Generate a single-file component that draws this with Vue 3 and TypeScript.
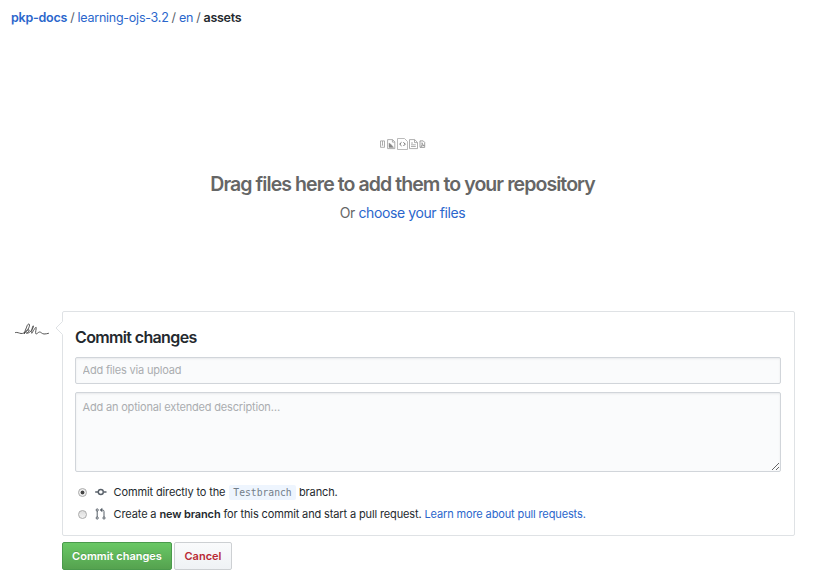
<script setup lang="ts">
import { ref } from 'vue'

const target = ref<'direct' | 'branch'>('direct')
const summary = ref('')
const description = ref('')
</script>

<template>
  <main class="page">
    <nav class="breadcrumb">
      <a class="root">pkp-docs</a><i>/</i><a class="folder">learning-ojs-3.2</a><i>/</i><a>en</a><i>/</i><strong>assets</strong>
    </nav>

    <section class="dropzone">
      <svg class="files" width="48" height="14" viewBox="0 0 48 14" fill="none" stroke="#999" stroke-width=".8">
        <path d="M1.5 3.9h4v6.4h-4zM3.5 4v4M2.8 8.2h1.4" />
        <path d="M8.6 2.6h5l2.2 2.2v6.8H8.6zM13.4 2.8v2.3h2.2" />
        <path d="M10 10.4V6l2 1.4 2.6 3z" fill="#888" stroke="#888" stroke-width=".4" />
        <path d="M18.5 1.5h7l3 3v8h-10z" stroke="#aaa" />
        <path d="m22.5 5.3-1.8 1.8 1.8 1.8m2-3.6 1.8 1.8-1.8 1.8" stroke="#666" stroke-width="1" />
        <path d="M30.5 2.6h5.2l2.8 2.8v6.2h-8zM35.5 2.8v2.8h2.8M32 6h2M32 7.8h4.8M32 9.5h4.8" />
        <path d="M41 3.9h3.2l1.5 1.5v5H41zM42 9.5c1-1 1.3-2.5 1-3.8.3 1.8 1 2.5 2.3 2.8-1.2-.1-2.3.2-3.3 1" stroke="#888" />
      </svg>
      <h1>Drag files here to add them to your repository</h1>
      <p>Or <a>choose your files</a></p>
    </section>

    <form class="commit" @submit.prevent>
      <svg class="avatar" width="36" height="36" viewBox="0 0 36 36" fill="none" stroke="#444" stroke-width=".9" stroke-linecap="round">
        <path d="M1.500 19.500c2-.5 3.500.7 5.500 1 4 .5 8.500-5 8.500-8.500 0-1.700-1.900-1-2.400.8-.9 2.700-2.600 6-2.800 8 1.200-2 3.500-4.600 4.700-4 .8 1-1.200 3-2.700 3.300 2.500.6 4.700-1.800 6-4 .9-1.500 1.500-3.200.9-3.300-1.100 1-1.700 6-1.400 7.500 1.300-2 3.400-6 4.300-6 .5 1.500-1.100 5.200-.3 6.400.9.900 2.300-1.600 3.700-1.700 1.500-.1 2.100 1.700 4.500 2 1.700.1 3-.4 4.500-.7" />
      </svg>
      <div class="content">
        <div class="card">
          <svg class="caret" width="8" height="14" viewBox="0 0 8 14">
            <path d="M8 0 1 7l7 7z" fill="#fff" />
            <path d="M7.500.5 1 7l6.500 6.500" fill="none" stroke="#dfe2e5" />
          </svg>
          <h2>Commit changes</h2>
          <input v-model="summary" class="field" type="text" placeholder="Add files via upload" />
          <textarea v-model="description" class="field" placeholder="Add an optional extended description…"></textarea>
          <label class="option">
            <input v-model="target" type="radio" value="direct" />
            <svg class="icon" width="12" height="14" viewBox="0 0 12 14" fill="none" stroke="#586069" stroke-width="1.400">
              <path d="M.2 7H3m6 0h2.500" /><circle cx="5.800" cy="7" r="2.500" />
            </svg>
            <span class="direct">Commit directly to the <code>Testbranch</code> branch.</span>
          </label>
          <label class="option">
            <input v-model="target" type="radio" value="branch" />
            <svg class="icon" width="12" height="14" viewBox="0 0 12 14" fill="none" stroke="#586069" stroke-width="1">
              <circle cx="2.200" cy="3" r="1.100" /><circle cx="2.200" cy="11" r="1.100" /><circle cx="9" cy="11" r="1.100" />
              <path d="M2.200 4v6M9 10V4.500q0-1.500-1.500-1.500H6" />
              <path d="M7.300.7v4.600L4.700 3z" fill="#586069" stroke="none" />
            </svg>
            <span class="pull">Create a <b>new branch</b> for this commit and start a pull request. <a>Learn more about pull requests.</a></span>
          </label>
        </div>
        <div class="actions">
          <button class="primary" type="submit">Commit changes</button>
          <button class="cancel" type="button">Cancel</button>
        </div>
      </div>
    </form>
  </main>
</template>

<style>
body { background: #fff; overflow: hidden; }
</style>

<style scoped>
* { box-sizing: border-box; }
.page {
  width: 823px;
  height: 588px;
  padding: 8px 28px 0 11px;
  font-family: Inter, "Liberation Sans", sans-serif;
  font-size: 11px;
  color: #24292e;
  white-space: nowrap;
}
a { color: #2a66cc; }
.breadcrumb { height: 20px; font-size: 12.500px; line-height: 20px; letter-spacing: -.25px; }
.breadcrumb .root { font-weight: 600; }
.breadcrumb i { margin: 0 3.100px; font-style: normal; color: #586069; }
.breadcrumb strong { font-weight: 600; letter-spacing: -.3px; }
.dropzone {
  display: flex;
  flex-direction: column;
  align-items: center;
  height: 283px;
  padding: 109px 0 0;
  color: #666;
}
.dropzone .files { display: block; }
.dropzone h1 { margin: 21px 1px 0 0; font-size: 19.500px; line-height: 24px; font-weight: 600; letter-spacing: -.92px; }
.dropzone p { margin: 6px 1px 0 0; font-size: 14px; line-height: 22px; letter-spacing: -.4px; }
.commit { display: flex; align-items: flex-start; gap: 12px; }
.avatar { flex: none; width: 39px; height: 36px; margin-top: 2px; padding-left: 3px; }
.content { width: 733px; }
.card { position: relative; height: 225px; padding: 15px 13px 0 12px; border: 1px solid #dfe2e5; border-radius: 2px; }
.caret { position: absolute; left: -8px; top: 9px; }
h2 { margin: 0 0 9px; font-size: 16px; line-height: 21px; font-weight: 600; letter-spacing: -.64px; }
.field {
  display: block;
  width: 706px;
  margin: 0 0 8px;
  padding: 0 7px 0 6.500px;
  border: 1px solid #d1d5da;
  border-radius: 2px;
  outline: none;
  background: #fafbfc;
  box-shadow: inset 0 1px 2px rgba(27, 31, 35, .075);
  font: inherit;
  letter-spacing: -.18px;
  color: #24292e;
}
.field::placeholder { color: #aaadb0; opacity: 1; }
input.field { height: 27px; padding-bottom: 2px; }
textarea.field { height: 80px; padding-top: 7px; margin-bottom: 9px; line-height: 15px; resize: vertical; }
.option { display: flex; align-items: center; height: 22px; padding-left: 3px; }
.option input {
  appearance: none;
  width: 9px;
  height: 9px;
  margin: 1px 8px 0 0;
  border: 1px solid #aaa;
  border-radius: 50%;
  background: linear-gradient(#ddd, #f2f2f2);
}
.option input:checked { background: radial-gradient(circle, #444 0 1.500px, #eee 2.300px); }
.icon { flex: none; margin-right: 6.600px; }
.option span { font-size: 11px; letter-spacing: -.13px; }
b { font-weight: 600; }
code {
  display: inline-block;
  height: 15px;
  margin: 0 .4px 0 1px;
  padding: 0 4px;
  border-radius: 2px;
  background: #eef5fe;
  color: #737e89;
  font: 9.700px/15px "DejaVu Sans Mono", monospace;
  letter-spacing: 0;
}
.actions { display: flex; gap: 2px; padding-top: 6px; }
button { height: 28px; padding: 0; border-radius: 2px; font: 600 11px Inter, sans-serif; }
.primary { width: 110px; border: 1px solid #4a9a4c; color: #fff; background: linear-gradient(#69c865, #55a24f); text-shadow: 0 -1px 0 rgba(0, 0, 0, .12); }
.cancel { width: 58px; border: 1px solid #cdd0d3; color: #b92a35; background: linear-gradient(#fafbfc, #eff2f5); }
</style>
